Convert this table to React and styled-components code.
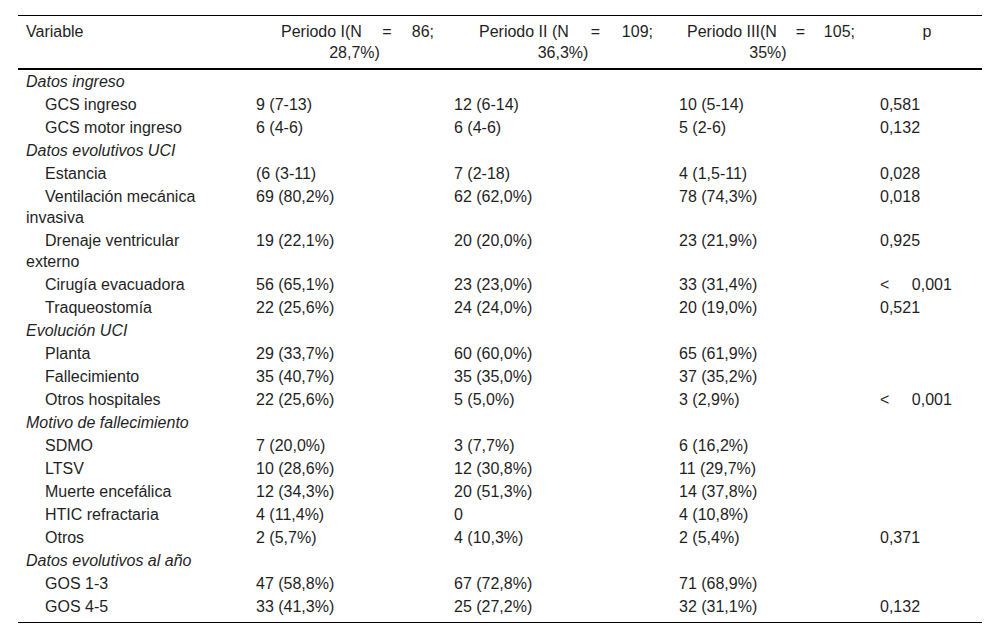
import React from 'react';
import styled, { createGlobalStyle } from 'styled-components';

const GlobalStyle = createGlobalStyle`
  body {
    margin: 0;
    background: #fff;
    font-family: "Liberation Sans", Arial, sans-serif;
  }
`;

const periods = [
  { words: ['Periodo I(N', '=', '86;'], tail: '28,7%)', pad: '5px 12px 5px 33px' },
  { words: ['Periodo II (N', '=', '109;'], tail: '36,3%)', pad: '5px 18px 5px 33px' },
  { words: ['Periodo III(N', '=', '105;'], tail: '35%)', pad: '5px 17px 5px 16px' },
];

const widths = [230, 198, 225, 201, 110];

const rows = [
  { group: 'Datos ingreso' },
  { label: 'GCS ingreso', values: ['9 (7-13)', '12 (6-14)', '10 (5-14)', '0,581'] },
  { label: 'GCS motor ingreso', values: ['6 (4-6)', '6 (4-6)', '5 (2-6)', '0,132'] },
  { group: 'Datos evolutivos UCI' },
  { label: 'Estancia', values: ['(6 (3-11)', '7 (2-18)', '4 (1,5-11)', '0,028'] },
  { label: 'Ventilación mecánica invasiva', values: ['69 (80,2%)', '62 (62,0%)', '78 (74,3%)', '0,018'] },
  { label: 'Drenaje ventricular externo', values: ['19 (22,1%)', '20 (20,0%)', '23 (21,9%)', '0,925'] },
  { label: 'Cirugía evacuadora', values: ['56 (65,1%)', '23 (23,0%)', '33 (31,4%)', '< 0,001'] },
  { label: 'Traqueostomía', values: ['22 (25,6%)', '24 (24,0%)', '20 (19,0%)', '0,521'] },
  { group: 'Evolución UCI' },
  { label: 'Planta', values: ['29 (33,7%)', '60 (60,0%)', '65 (61,9%)', ''] },
  { label: 'Fallecimiento', values: ['35 (40,7%)', '35 (35,0%)', '37 (35,2%)', ''] },
  { label: 'Otros hospitales', values: ['22 (25,6%)', '5 (5,0%)', '3 (2,9%)', '< 0,001'] },
  { group: 'Motivo de fallecimiento' },
  { label: 'SDMO', values: ['7 (20,0%)', '3 (7,7%)', '6 (16,2%)', ''] },
  { label: 'LTSV', values: ['10 (28,6%)', '12 (30,8%)', '11 (29,7%)', ''] },
  { label: 'Muerte encefálica', values: ['12 (34,3%)', '20 (51,3%)', '14 (37,8%)', ''] },
  { label: 'HTIC refractaria', values: ['4 (11,4%)', '0', '4 (10,8%)', ''] },
  { label: 'Otros', values: ['2 (5,7%)', '4 (10,3%)', '2 (5,4%)', '0,371'] },
  { group: 'Datos evolutivos al año' },
  { label: 'GOS 1-3', values: ['47 (58,8%)', '67 (72,8%)', '71 (68,9%)', ''] },
  { label: 'GOS 4-5', values: ['33 (41,3%)', '25 (27,2%)', '32 (31,1%)', '0,132'] },
];

const App = () => {
  return (
    <>
      <GlobalStyle />
      <Page>
        <Table>
          <colgroup>
            {widths.map((w, i) => (
              <col key={i} style={{ width: w }} />
            ))}
          </colgroup>
          <thead>
            <tr>
              <Th $align="left" $pad="5px 8px">Variable</Th>
              {periods.map((p, i) => (
                <Th key={i} $align="center" $pad={p.pad}>
                  <HeadLine>
                    {p.words.map((w, j) => <span key={j}>{w}</span>)}
                  </HeadLine>
                  <HeadTail>{p.tail}</HeadTail>
                </Th>
              ))}
              <Th $align="center" $pad="5px 8px">p</Th>
            </tr>
          </thead>
          <tbody>
            {rows.map((row, r) => {
              const last = r === rows.length - 1;
              if (row.group) {
                return (
                  <tr key={r}>
                    <Group $last={last}>{row.group}</Group>
                    {[0, 1, 2, 3].map((c) => <Td key={c} $last={last} />)}
                  </tr>
                );
              }
              return (
                <tr key={r}>
                  <Label $last={last}>{row.label}</Label>
                  {row.values.map((v, c) => (
                    <Td key={c} $last={last}>
                      {v.startsWith('<') ? <Less>{v}</Less> : v}
                    </Td>
                  ))}
                </tr>
              );
            })}
          </tbody>
        </Table>
      </Page>
    </>
  );
};

export default App;

const Page = styled.div`
  padding: 15px 18px;
`;

const Table = styled.table`
  width: 964px;
  table-layout: fixed;
  border-collapse: collapse;
  font-family: "Liberation Sans", Arial, sans-serif;
  font-size: 16px;
  line-height: 21px;
  color: #1f1f1f;
  border-top: 1px solid #000;
  border-bottom: 1px solid #000;
`;

const Th = styled.th`
  font-weight: normal;
  vertical-align: top;
  padding: ${({ $pad }) => $pad};
  text-align: ${({ $align }) => $align};
  border-bottom: 2px solid #000;
`;

const HeadLine = styled.div`
  display: flex;
  justify-content: space-between;
  white-space: nowrap;
`;

const HeadTail = styled.div`
  text-align: center;
  padding-right: 6px;
`;

const Td = styled.td`
  vertical-align: top;
  text-align: left;
  padding: ${({ $last }) => ($last ? '1px 8px 5px' : '1px 8px')};
`;

const Label = styled(Td)`
  text-indent: 19px;
  padding-right: 12px;
`;

const Group = styled(Td)`
  font-style: italic;
`;

const Less = styled.span`
  word-spacing: 18px;
`;
